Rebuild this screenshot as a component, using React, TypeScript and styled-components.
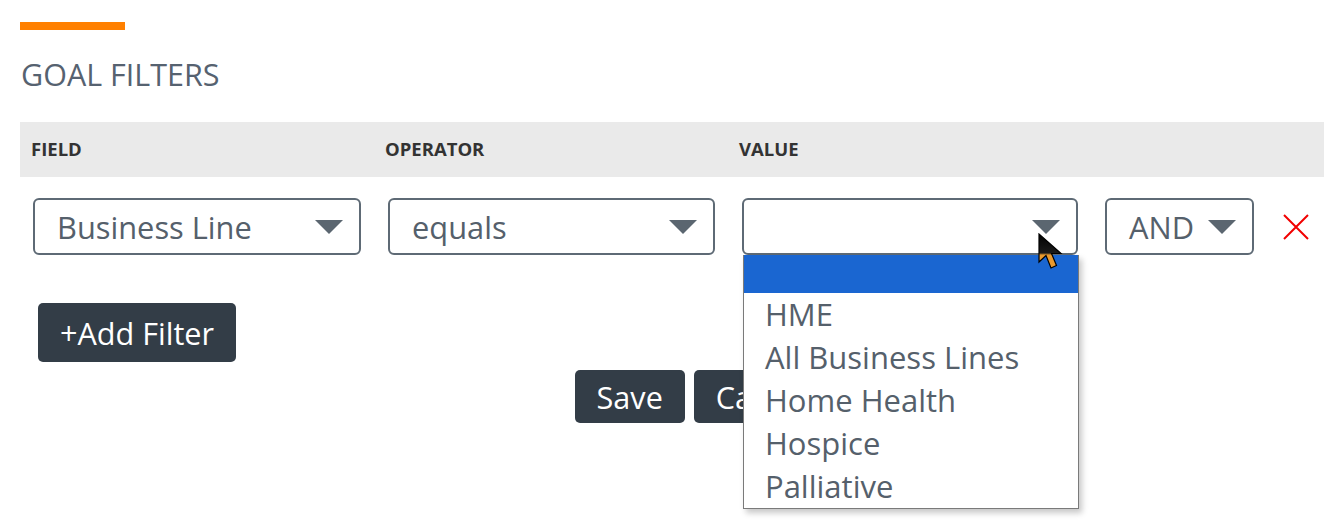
import { createGlobalStyle, styled } from 'styled-components';

const GlobalStyle = createGlobalStyle`
    body {
        margin: 0;
        background: #fff;
        font-family: 'Open Sans', 'Liberation Sans', sans-serif;
    }
`;

const Page = styled.div`
    position: relative;
    width: 1332px;
    height: 528px;
    padding: 22px 8px 0 20px;
    box-sizing: border-box;
`;

const Accent = styled.div`
    width: 105px;
    height: 8px;
    background-color: #ff8000;
`;

const Title = styled.h2`
    margin: 24px 0 27px 1px;
    font-size: 30.5px;
    font-weight: 400;
    line-height: 41px;
    color: #566270;
`;

const HeadBar = styled.div`
    display: grid;
    grid-template-columns: 354px 354px 354px;
    align-items: center;
    height: 55px;
    padding-left: 11px;
    background-color: #eaeaea;
`;

const HeadCell = styled.span`
    font-size: 18.5px;
    font-weight: 700;
    line-height: 24px;
    margin-top: -2px;
    color: #333;
`;

const FilterRow = styled.div`
    display: grid;
    grid-template-columns: 328px 327px 336px auto auto;
    justify-content: start;
    align-items: center;
    column-gap: 27px;
    margin-top: 21px;
    padding-left: 13px;
`;

const SelectBox = styled.div<{ $open?: boolean }>`
    position: relative;
    display: flex;
    align-items: center;
    gap: 14px;
    height: 57px;
    box-sizing: border-box;
    padding: 0 16px 0 22px;
    border: 2px solid #5e6a75;
    border-radius: 6px;
    background: #fff;
    font-size: 30.8px;
    color: #55606b;
`;

const SelectLabel = styled.span`
    flex: 1;
    white-space: nowrap;
`;

const Menu = styled.ul`
    position: absolute;
    top: 55px;
    left: -1px;
    width: 336px;
    margin: 0;
    padding: 0;
    list-style: none;
    box-sizing: border-box;
    border: 1px solid #7a7a7a;
    border-top: 0;
    background: #fff;
    box-shadow: 3px 4px 6px rgba(0, 0, 0, 0.22);
    z-index: 5;
`;

const MenuItem = styled.li<{ $active?: boolean }>`
    height: ${(p) => (p.$active ? '38px' : '43px')};
    padding-left: 21px;
    font-size: 31px;
    line-height: 43px;
    white-space: nowrap;
    color: #55606b;
    background-color: ${(p) => (p.$active ? '#1a66d1' : 'transparent')};
`;

const RemoveButton = styled.button`
    display: flex;
    padding: 0;
    margin-left: 2px;
    border: 0;
    background: transparent;
    cursor: pointer;
`;

const DarkButton = styled.button<{ $tall?: boolean }>`
    height: ${(p) => (p.$tall ? '59px' : '53px')};
    padding: 0 22px;
    border: 0;
    border-radius: 5px;
    background-color: #333d47;
    color: #fff;
    font-family: 'Open Sans', 'Liberation Sans', sans-serif;
    font-size: 30.6px;
    white-space: nowrap;
`;

const AddWrap = styled.div`
    margin: 48px 0 0 18px;
`;

const Actions = styled.div`
    display: flex;
    justify-content: center;
    gap: 9px;
    margin-top: 8px;
    padding-left: 63px;
`;

const Pointer = styled.svg`
    position: absolute;
    left: 1038px;
    top: 233px;
    z-index: 10;
    pointer-events: none;
`;

const Caret = () => (
    <svg width="28" height="14" viewBox="0 0 28 14">
        <path d="M0 0h28L14 14z" fill="#5b6670" />
    </svg>
);

const Select = ({ label, open, options }: { label?: string; open?: boolean; options?: string[] }) => (
    <SelectBox $open={open}>
        <SelectLabel>{label}</SelectLabel>
        <Caret />
        {open && options && (
            <Menu>
                <MenuItem $active />
                {options.map((o) => (
                    <MenuItem key={o}>{o}</MenuItem>
                ))}
            </Menu>
        )}
    </SelectBox>
);

const lines = ['HME', 'All Business Lines', 'Home Health', 'Hospice', 'Palliative'];

export default function App() {
    return (
        <>
            <GlobalStyle />
            <Page>
                <Accent />
                <Title>GOAL FILTERS</Title>
                <HeadBar>
                    <HeadCell>FIELD</HeadCell>
                    <HeadCell>OPERATOR</HeadCell>
                    <HeadCell>VALUE</HeadCell>
                </HeadBar>
                <FilterRow>
                    <Select label="Business Line" />
                    <Select label="equals" />
                    <Select open options={lines} />
                    <Select label="AND" />
                    <RemoveButton aria-label="Remove filter">
                        <svg width="26" height="26" viewBox="0 0 26 26">
                            <path d="M1 1L25 25M25 1L1 25" stroke="#f20000" strokeWidth="2" />
                        </svg>
                    </RemoveButton>
                </FilterRow>
                <AddWrap>
                    <DarkButton $tall>+Add Filter</DarkButton>
                </AddWrap>
                <Actions>
                    <DarkButton>Save</DarkButton>
                    <DarkButton>Cancel</DarkButton>
                </Actions>
                <Pointer width="26" height="40" viewBox="0 0 26 40">
                    <defs>
                        <linearGradient id="ptr" x1="0" y1="0" x2="0" y2="40" gradientUnits="userSpaceOnUse">
                            <stop offset="0" stopColor="#000" />
                            <stop offset="0.5" stopColor="#1a1a1a" />
                            <stop offset="0.55" stopColor="#e8992e" />
                            <stop offset="1" stopColor="#e8992e" />
                        </linearGradient>
                    </defs>
                    <path
                        d="M1 1L1 29L8 22.5L13 35L18.5 32.5L13.5 20.5L23 20.5Z"
                        fill="url(#ptr)"
                        stroke="#000"
                        strokeWidth="1.2"
                        strokeLinejoin="miter"
                    />
                </Pointer>
            </Page>
        </>
    );
}
